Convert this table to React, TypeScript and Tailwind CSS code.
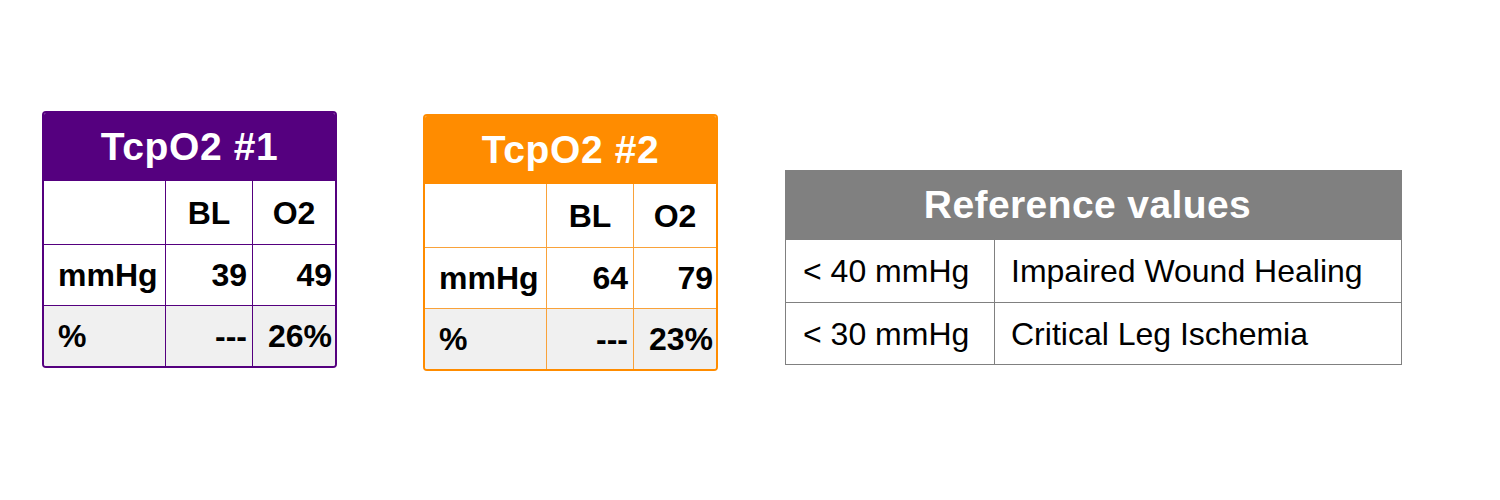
import React from "react";

type Row = { label: string; bl: string; o2: string; shaded?: boolean; h: string };

const rows: Row[] = [
  { label: "mmHg", bl: "39", o2: "49", h: "h-[61px]" },
  { label: "%", bl: "---", o2: "26%", shaded: true, h: "h-[60px]" },
];

const rows2: Row[] = [
  { label: "mmHg", bl: "64", o2: "79", h: "h-[61px]" },
  { label: "%", bl: "---", o2: "23%", shaded: true, h: "h-[60px]" },
];

function TcpTable({
  title,
  data,
  color,
}: {
  title: string;
  data: Row[];
  color: "purple" | "orange";
}) {
  const isPurple = color === "purple";
  const outer = isPurple ? "border-[#55007f]" : "border-[#ff8c00]";
  const line = isPurple ? "border-[#55007f]" : "border-[#f9a23a]";
  const head = isPurple ? "bg-[#55007f]" : "bg-[#ff8c00]";

  return (
    <div className={`w-[295px] border-2 ${outer} rounded-[4px] overflow-hidden bg-white`}>
      <div className={`${head} h-[68px] flex items-center justify-center text-white font-bold text-[39px] tracking-[0.6px]`}>
        {title}
      </div>
      <div className={`grid grid-cols-[122px_87px_1fr] h-[64px] border-b ${line} font-bold text-[32px]`}>
        <div className={`border-r ${line}`} />
        <div className={`border-r ${line} flex items-center justify-center`}>BL</div>
        <div className="flex items-center justify-center">O2</div>
      </div>
      {data.map((r, i) => (
        <div
          key={r.label}
          className={`grid grid-cols-[122px_87px_1fr] ${r.h} font-bold text-[32px] ${
            r.shaded ? "bg-[#f0f0f0]" : "bg-white"
          } ${i < data.length - 1 ? `border-b ${line}` : ""}`}
        >
          <div className={`border-r ${line} flex items-center pl-[14px]`}>{r.label}</div>
          <div className={`border-r ${line} flex items-center justify-end pr-[5px]`}>{r.bl}</div>
          <div className="flex items-center justify-end pr-[3px]">{r.o2}</div>
        </div>
      ))}
    </div>
  );
}

function ReferenceTable() {
  return (
    <div className="w-[617px] border border-[#808080] bg-white">
      <div className="bg-[#808080] h-[69px] flex items-center justify-center text-white font-bold text-[39px] tracking-[0.4px] pr-[12px]">
        Reference values
      </div>
      <div className="grid grid-cols-[209px_1fr] h-[63px] border-b border-[#808080] text-[32px]">
        <div className="border-r border-[#808080] flex items-center pl-[17px]">&lt; 40 mmHg</div>
        <div className="flex items-center pl-[16px]">Impaired Wound Healing</div>
      </div>
      <div className="grid grid-cols-[209px_1fr] h-[61px] text-[32px]">
        <div className="border-r border-[#808080] flex items-center pl-[17px]">&lt; 30 mmHg</div>
        <div className="flex items-center pl-[16px]">Critical Leg Ischemia</div>
      </div>
    </div>
  );
}

export default function App() {
  return (
    <div
      className="w-[1500px] h-[500px] bg-white text-black flex items-start pl-[42px]"
      style={{ fontFamily: '"Liberation Sans", Arial, sans-serif' }}
    >
      <div className="mt-[111px]">
        <TcpTable title="TcpO2 #1" data={rows} color="purple" />
      </div>
      <div className="mt-[114px] ml-[86px]">
        <TcpTable title="TcpO2 #2" data={rows2} color="orange" />
      </div>
      <div className="mt-[170px] ml-[67px]">
        <ReferenceTable />
      </div>
    </div>
  );
}
